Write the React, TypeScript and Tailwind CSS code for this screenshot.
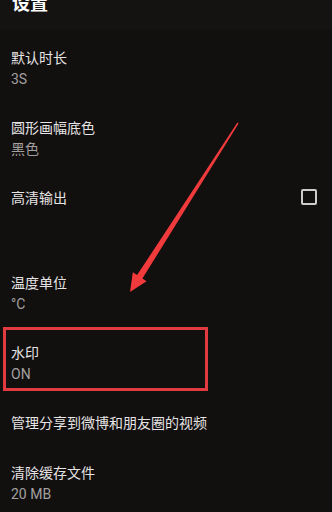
import React from 'react';

type Row = { title: string; value?: string; height: string; checkbox?: boolean };

const rows: Row[] = [
  { title: '默认时长', value: '3S', height: 'h-[70px]' },
  { title: '圆形画幅底色', value: '黑色', height: 'h-[70px]' },
  { title: '高清输出', height: 'h-[85px]', checkbox: true },
  { title: '温度单位', value: '°C', height: 'h-[70px]' },
  { title: '水印', value: 'ON', height: 'h-[70px]' },
  { title: '管理分享到微博和朋友圈的视频', height: 'h-[50px]' },
  { title: '清除缓存文件', value: '20 MB', height: 'h-[70px]' },
];

function SettingRow({ row }: { row: Row }) {
  return (
    <div className={`flex items-start justify-between pl-[11px] pr-[15px] pt-[18px] ${row.height}`}>
      <div className="flex flex-col">
        <span className="text-[14px] leading-[21px] text-[#e6e4e4]">{row.title}</span>
        {row.value && <span className="text-[14px] leading-[21px] text-[#a3a0a0]">{row.value}</span>}
      </div>
      {row.checkbox && (
        <div className="mt-px h-[16px] w-[16px] rounded-[2px] border-2 border-[#cfcccc]" />
      )}
    </div>
  );
}

export default function App() {
  return (
    <div
      className="relative h-[512px] w-full overflow-hidden bg-[#120f0f]"
      style={{ fontFamily: 'Roboto, "Noto Sans CJK SC", sans-serif' }}
    >
      <header className="h-[35px] bg-[#151212] pl-[12px]">
        <h1 className="mt-[-5px] text-[18px] font-bold leading-[18px] text-white">设置</h1>
      </header>

      <div className="flex flex-col">
        {rows.map((row) => (
          <SettingRow key={row.title} row={row} />
        ))}
      </div>

      {/* annotation: highlight box */}
      <div className="absolute left-[3px] top-[327px] h-[64px] w-[205px] border-[3px] border-[#e23b3f]" />

      {/* annotation: arrow */}
      <svg className="absolute left-0 top-0" width="332" height="512" viewBox="0 0 332 512">
        <polygon
          points="238.6,123.4 142.4,278.6 146.6,281.3 130,292 132.8,272.3 137.1,275.1 237.4,122.6"
          fill="#f03a3c"
        />
      </svg>
    </div>
  );
}
